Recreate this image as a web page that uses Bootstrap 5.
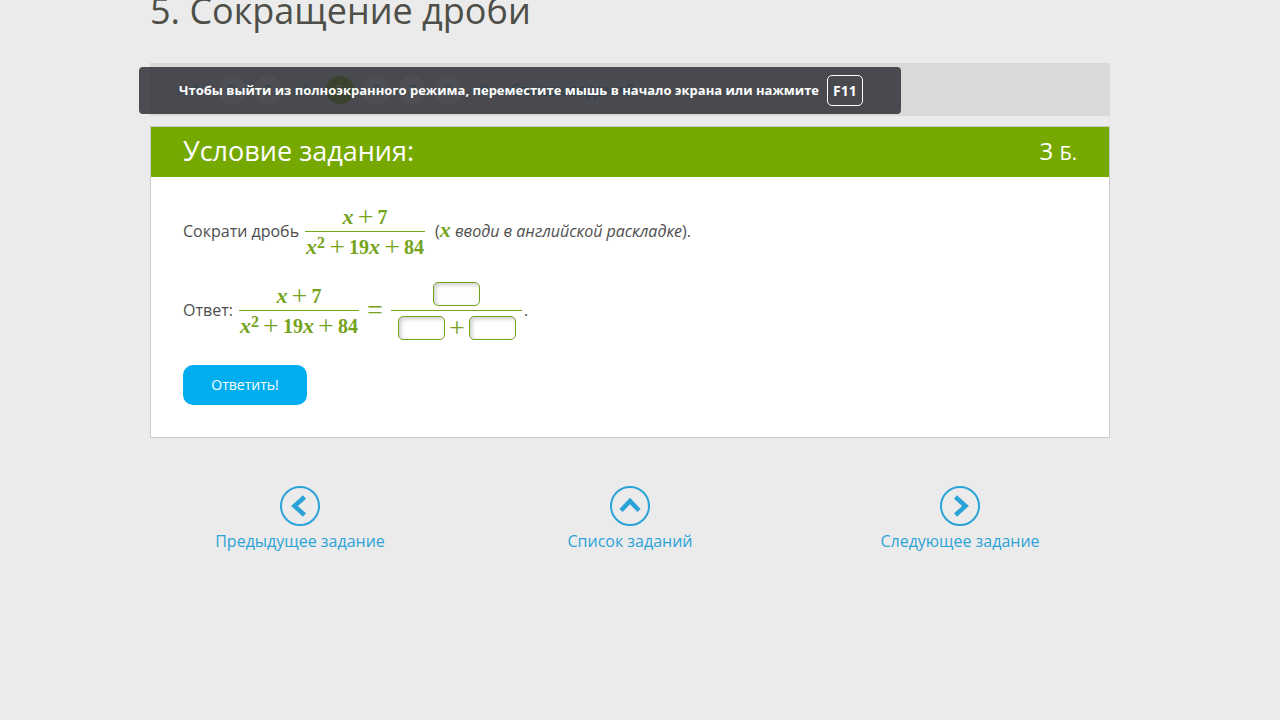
<!DOCTYPE html>
<html lang="ru">
<head>
<meta charset="utf-8">
<meta name="viewport" content="width=device-width, initial-scale=1">
<title>5. Сокращение дроби</title>
<link href="https://cdn.jsdelivr.net/npm/bootstrap@5.3.0/dist/css/bootstrap.min.css" rel="stylesheet">
<style>
  body { background: #ebebeb; color: #4e4e4e; font-family: "Open Sans", "Noto Sans", sans-serif; font-size: 16px; line-height: 24px; padding-right: 20px; }
  .page { max-width: 960px; }
  .page-title { font-size: 36px; font-weight: 400; line-height: 22px; color: #4e4f48; margin-bottom: 41px; }
  .steps { background: #d9d9d9; min-height: 53px; padding: 0 32px; margin-bottom: 10px; }
  .steps a { color: #1f9bd0; text-decoration: none; }
  .step { width: 28px; height: 28px; border-radius: 50%; background: #f4f4f4; font-size: 14px; }
  .steps .done { background: transparent; }
  .steps .current { background: #76a900; color: #fff; }
  .hint { left: -11px; top: 4px; min-height: 47px; width: 762px; padding: 0 40px; border-radius: 4px; background: rgba(44, 47, 53, .84); color: #fff; font-size: 13px; font-weight: 700; }
  .hint span { padding-bottom: 2px; }
  .hint kbd { font: inherit; font-size: 14px; line-height: 29px; padding: 0 5px; background: transparent; border: 1px solid #fff; border-radius: 5px; }
  .task { border: 1px solid #cbcbcb; background: #fff; }
  .task-head { background: #76a900; color: #fff; height: 50px; padding: 0 32px; }
  .task-head h2 { font-size: 27px; line-height: 48px; font-weight: 400; }
  .points { font-size: 24px; line-height: 48px; }
  .points small { font-size: 20px; }
  .task-body { padding: 30px 32px 32px; }
  .line-text { padding-bottom: 2px; }
  .lead-in { margin-right: 6px; }
  .note { margin-left: 10px; }
  .formula { color: #76a31c; font-family: "Liberation Serif", serif; font-size: 20px; line-height: 24px; font-weight: 700; white-space: nowrap; }
  .formula i, .var { font-family: "Liberation Serif", serif; font-size: 22px; font-weight: 700; font-style: italic; color: #76a31c; line-height: 20px; }
  .formula sup { font-size: 16px; top: -6px; line-height: 0; }
  .sign { display: inline-block; width: 24px; text-align: center; font-size: 28px; font-weight: 400; line-height: 24px; vertical-align: -2px; }
  .equals { margin: 0 4px; padding-bottom: 2px; }
  .frac { min-width: 120px; }
  .num { border-bottom: 1px solid #76a31c; padding-bottom: 2px; }
  .den { padding-top: 3px; }
  .first { height: 50px; margin-bottom: 25px; }
  .blank { width: 47px; height: 24px; border: 1px solid #76a31c; border-radius: 5px; box-shadow: inset 2px 2px 4px #ccc; padding: 0 4px; font-size: 16px; background: #fff; }
  .answer { margin-right: 2px; }
  .answer .num { padding-bottom: 4px; }
  .answer .den { padding: 5px 6px 0 7px; }
  .send { background: #00aeef; color: #fff; font-size: 14px; line-height: 20px; height: 40px; width: 124px; border: 0; border-radius: 10px; margin-top: 25px; }
  .send:hover { background: #0098d4; color: #fff; }
  .pager { margin-top: 48px; }
  .pager a { color: #2ba3d8; text-decoration: none; width: 300px; }
  .pager svg { margin-bottom: 3px; }
</style>
</head>
<body>
<main class="page mx-auto">
  <h1 class="page-title">5. Сокращение дроби</h1>

  <nav class="steps position-relative d-flex align-items-center gap-2" aria-label="Задания">
    <a class="step done d-flex align-items-center justify-content-center" href="#">1</a>
    <a class="step d-flex align-items-center justify-content-center" href="#">2</a>
    <a class="step d-flex align-items-center justify-content-center" href="#">3</a>
    <a class="step done d-flex align-items-center justify-content-center" href="#">4</a>
    <a class="step current d-flex align-items-center justify-content-center" href="#">5</a>
    <a class="step d-flex align-items-center justify-content-center" href="#">6</a>
    <a class="step d-flex align-items-center justify-content-center" href="#">7</a>
    <a class="step d-flex align-items-center justify-content-center" href="#">8</a>
    <a class="step done d-flex align-items-center justify-content-center" href="#">9</a>
    <a class="ms-1" href="#">Список заданий</a>
    <div class="hint position-absolute d-flex align-items-center gap-2 text-nowrap" role="status">
      <span>Чтобы выйти из полноэкранного режима, переместите мышь в начало экрана или нажмите</span>
      <kbd>F11</kbd>
    </div>
  </nav>

  <section class="task">
    <header class="task-head d-flex justify-content-between">
      <h2 class="m-0">Условие задания:</h2>
      <span class="points">3 <small>Б.</small></span>
    </header>
    <form class="task-body" onsubmit="return false">
      <div class="first d-flex align-items-center">
        <span class="line-text lead-in">Сократи дробь</span>
        <span class="formula frac text-center">
          <span class="num d-block"><i>x</i><span class="sign">+</span>7</span>
          <span class="den d-block"><i>x</i><sup>2</sup><span class="sign">+</span>19<i>x</i><span class="sign">+</span>84</span>
        </span>
        <span class="line-text note">(<span class="var">x</span> <em>вводи в английской раскладке</em>).</span>
      </div>
      <div class="d-flex align-items-center">
        <span class="line-text lead-in">Ответ:</span>
        <span class="formula frac text-center">
          <span class="num d-block"><i>x</i><span class="sign">+</span>7</span>
          <span class="den d-block"><i>x</i><sup>2</sup><span class="sign">+</span>19<i>x</i><span class="sign">+</span>84</span>
        </span>
        <span class="formula equals"><span class="sign">=</span></span>
        <span class="formula answer">
          <span class="num d-flex justify-content-center"><input class="blank" type="text" aria-label="Числитель"></span>
          <span class="den d-flex"><input class="blank" type="text" aria-label="Первое слагаемое знаменателя"><span class="sign">+</span><input class="blank" type="text" aria-label="Второе слагаемое знаменателя"></span>
        </span>
        <span class="line-text">.</span>
      </div>
      <button class="send btn d-block" type="submit">Ответить!</button>
    </form>
  </section>

  <nav class="pager d-flex justify-content-between" aria-label="Навигация">
    <a class="d-flex flex-column align-items-center" href="#">
      <svg width="40" height="40" viewBox="0 0 40 40" fill="none" stroke="currentColor" aria-hidden="true"><circle cx="20" cy="20" r="19" stroke-width="2"/><path d="M24.500 11 14.500 20l10 9" stroke-width="4.500"/></svg>
      Предыдущее задание
    </a>
    <a class="d-flex flex-column align-items-center" href="#">
      <svg width="40" height="40" viewBox="0 0 40 40" fill="none" stroke="currentColor" aria-hidden="true"><circle cx="20" cy="20" r="19" stroke-width="2"/><path d="M11 24.500 20 15l9 9.500" stroke-width="4.500"/></svg>
      Список заданий
    </a>
    <a class="d-flex flex-column align-items-center" href="#">
      <svg width="40" height="40" viewBox="0 0 40 40" fill="none" stroke="currentColor" aria-hidden="true"><circle cx="20" cy="20" r="19" stroke-width="2"/><path d="M15.500 11 25.500 20l-10 9" stroke-width="4.500"/></svg>
      Следующее задание
    </a>
  </nav>
</main>
<script src="https://cdn.jsdelivr.net/npm/bootstrap@5.3.0/dist/js/bootstrap.bundle.min.js"></script>
</body>
</html>
